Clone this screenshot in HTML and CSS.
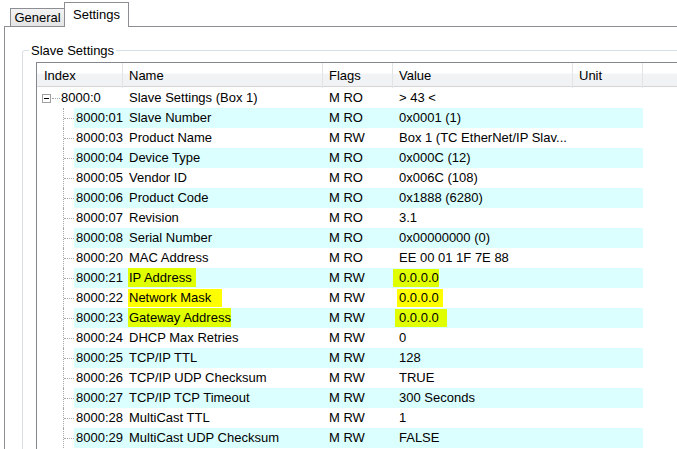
FILE: index.html
```html
<!DOCTYPE html>
<html>
<head>
<meta charset="utf-8">
<link rel="stylesheet" href="styles.css">
</head>
<body>
<div class="window">
  <div class="tabs">
    <div class="tab">General</div>
    <div class="tab active">Settings</div>
  </div>
  <div class="panel">
    <div class="group">
      <div class="group-title">Slave Settings</div>
      <div class="list">
        <div class="head">
          <div class="hc hc-index">Index</div>
          <div class="hc">Name</div>
          <div class="hc">Flags</div>
          <div class="hc">Value</div>
          <div class="hc">Unit</div>
          <div class="hc hc-fill"></div>
        </div>
        <div class="body">
          <div class="row">
            <div class="c-index"><span class="expander"></span><span class="hline"></span><span class="root-idx">8000:0</span></div>
            <div class="cell">Slave Settings (Box 1)</div>
            <div class="cell">M RO</div>
            <div class="cell">&gt; 43 &lt;</div>
            <div class="cell"></div>
            <div class="fill"></div>
          </div>
          <div class="row alt">
            <div class="c-index"><span class="tree"></span><span class="idx">8000:01</span></div>
            <div class="cell">Slave Number</div>
            <div class="cell">M RO</div>
            <div class="cell">0x0001 (1)</div>
            <div class="cell"></div>
            <div class="fill"></div>
          </div>
          <div class="row">
            <div class="c-index"><span class="tree"></span><span class="idx">8000:03</span></div>
            <div class="cell">Product Name</div>
            <div class="cell">M RW</div>
            <div class="cell">Box 1 (TC EtherNet/IP Slav...</div>
            <div class="cell"></div>
            <div class="fill"></div>
          </div>
          <div class="row alt">
            <div class="c-index"><span class="tree"></span><span class="idx">8000:04</span></div>
            <div class="cell">Device Type</div>
            <div class="cell">M RO</div>
            <div class="cell">0x000C (12)</div>
            <div class="cell"></div>
            <div class="fill"></div>
          </div>
          <div class="row">
            <div class="c-index"><span class="tree"></span><span class="idx">8000:05</span></div>
            <div class="cell">Vendor ID</div>
            <div class="cell">M RO</div>
            <div class="cell">0x006C (108)</div>
            <div class="cell"></div>
            <div class="fill"></div>
          </div>
          <div class="row alt">
            <div class="c-index"><span class="tree"></span><span class="idx">8000:06</span></div>
            <div class="cell">Product Code</div>
            <div class="cell">M RO</div>
            <div class="cell">0x1888 (6280)</div>
            <div class="cell"></div>
            <div class="fill"></div>
          </div>
          <div class="row">
            <div class="c-index"><span class="tree"></span><span class="idx">8000:07</span></div>
            <div class="cell">Revision</div>
            <div class="cell">M RO</div>
            <div class="cell">3.1</div>
            <div class="cell"></div>
            <div class="fill"></div>
          </div>
          <div class="row alt">
            <div class="c-index"><span class="tree"></span><span class="idx">8000:08</span></div>
            <div class="cell">Serial Number</div>
            <div class="cell">M RO</div>
            <div class="cell">0x00000000 (0)</div>
            <div class="cell"></div>
            <div class="fill"></div>
          </div>
          <div class="row">
            <div class="c-index"><span class="tree"></span><span class="idx">8000:20</span></div>
            <div class="cell">MAC Address</div>
            <div class="cell">M RO</div>
            <div class="cell">EE 00 01 1F 7E 88</div>
            <div class="cell"></div>
            <div class="fill"></div>
          </div>
          <div class="row alt">
            <div class="c-index"><span class="tree"></span><span class="idx">8000:21</span></div>
            <div class="cell"><span class="hl hl-ip">IP Address</span></div>
            <div class="cell">M RW</div>
            <div class="cell"><span class="hl hl-v1">0.0.0.0</span></div>
            <div class="cell"></div>
            <div class="fill"></div>
          </div>
          <div class="row">
            <div class="c-index"><span class="tree"></span><span class="idx">8000:22</span></div>
            <div class="cell"><span class="hl hl-mask">Network Mask</span></div>
            <div class="cell">M RW</div>
            <div class="cell"><span class="hl hl-v2">0.0.0.0</span></div>
            <div class="cell"></div>
            <div class="fill"></div>
          </div>
          <div class="row alt">
            <div class="c-index"><span class="tree"></span><span class="idx">8000:23</span></div>
            <div class="cell"><span class="hl hl-gw">Gateway Address</span></div>
            <div class="cell">M RW</div>
            <div class="cell"><span class="hl hl-v3">0.0.0.0</span></div>
            <div class="cell"></div>
            <div class="fill"></div>
          </div>
          <div class="row">
            <div class="c-index"><span class="tree"></span><span class="idx">8000:24</span></div>
            <div class="cell">DHCP Max Retries</div>
            <div class="cell">M RW</div>
            <div class="cell">0</div>
            <div class="cell"></div>
            <div class="fill"></div>
          </div>
          <div class="row alt">
            <div class="c-index"><span class="tree"></span><span class="idx">8000:25</span></div>
            <div class="cell">TCP/IP TTL</div>
            <div class="cell">M RW</div>
            <div class="cell">128</div>
            <div class="cell"></div>
            <div class="fill"></div>
          </div>
          <div class="row">
            <div class="c-index"><span class="tree"></span><span class="idx">8000:26</span></div>
            <div class="cell">TCP/IP UDP Checksum</div>
            <div class="cell">M RW</div>
            <div class="cell">TRUE</div>
            <div class="cell"></div>
            <div class="fill"></div>
          </div>
          <div class="row alt">
            <div class="c-index"><span class="tree"></span><span class="idx">8000:27</span></div>
            <div class="cell">TCP/IP TCP Timeout</div>
            <div class="cell">M RW</div>
            <div class="cell">300 Seconds</div>
            <div class="cell"></div>
            <div class="fill"></div>
          </div>
          <div class="row">
            <div class="c-index"><span class="tree"></span><span class="idx">8000:28</span></div>
            <div class="cell">MultiCast TTL</div>
            <div class="cell">M RW</div>
            <div class="cell">1</div>
            <div class="cell"></div>
            <div class="fill"></div>
          </div>
          <div class="row alt">
            <div class="c-index"><span class="tree"></span><span class="idx">8000:29</span></div>
            <div class="cell">MultiCast UDP Checksum</div>
            <div class="cell">M RW</div>
            <div class="cell">FALSE</div>
            <div class="cell"></div>
            <div class="fill"></div>
          </div>
        </div>
      </div>
    </div>
  </div>
</div>
</body>
</html>
```

FILE: styles.css
```css
html, body {
  margin: 0;
  padding: 0;
}
body {
  width: 677px;
  height: 449px;
  overflow: hidden;
  background: #ffffff;
  color: #000000;
  font: 13px "Liberation Sans", Arial, sans-serif;
}
.window {
  width: 677px;
  height: 449px;
  overflow: hidden;
}
.tabs {
  display: flex;
  align-items: flex-end;
  height: 26px;
  padding-left: 10px;
}
.tab {
  box-sizing: border-box;
  width: 55px;
  height: 18px;
  border: 1px solid #8c8e94;
  border-bottom: 0;
  background: linear-gradient(#f3f3f3, #e4e4e4);
  display: flex;
  align-items: center;
  justify-content: center;
}
.tab.active {
  width: 65px;
  height: 25px;
  margin-left: -1px;
  margin-bottom: -1px;
  padding-bottom: 2px;
  background: #ffffff;
  position: relative;
  z-index: 1;
}
.panel {
  width: 760px;
  margin-left: 4px;
  border: 1px solid #8c8e94;
  padding-left: 17px;
  height: 440px;
}
.group {
  margin-top: 23px;
  border: 1px solid #d5dfe5;
  border-radius: 3px;
  padding-left: 13px;
  height: 410px;
}
.group-title {
  margin: -8px 0 0 -7px;
  padding: 0 2px;
  width: max-content;
  background: #ffffff;
  line-height: 15px;
}
.list {
  margin-top: 4px;
  border-top: 1px solid #828790;
  border-left: 1px solid #828790;
  height: 390px;
}
.head,
.row {
  display: grid;
  grid-template-columns: 86px 200px 70px 180px 70px 1fr;
}
.head {
  box-sizing: border-box;
  height: 24px;
  border-bottom: 1px solid #d5d5d5;
  background: linear-gradient(#ffffff 0%, #ffffff 44%, #f2f3f5 48%, #f1f2f4 100%);
}
.hc {
  border-right: 1px solid #e3e4e6;
  padding-left: 6px;
  line-height: 25px;
  white-space: nowrap;
}
.hc-index {
  padding-left: 7px;
}
.hc-fill {
  border-right: 0;
}
.body {
  padding-top: 1px;
}
.row {
  height: 20px;
  line-height: 20px;
}
.cell {
  padding-left: 6px;
  white-space: nowrap;
  overflow: hidden;
}
.row.alt .cell,
.row.alt .idx {
  background: #dbffff;
}
.c-index {
  display: flex;
  align-items: stretch;
  white-space: nowrap;
}
.expander {
  box-sizing: border-box;
  align-self: center;
  width: 9px;
  height: 9px;
  margin-left: 5px;
  border: 1px solid #a0a0a0;
  background: #ffffff;
  position: relative;
}
.expander::after {
  content: "";
  position: absolute;
  left: 1px;
  top: 3px;
  width: 5px;
  height: 1px;
  background: #000000;
}
.hline {
  align-self: center;
  width: 8px;
  margin-left: 1px;
  border-top: 1px dotted #a0a0a0;
}
.root-idx {
  padding-left: 1px;
}
.tree {
  width: 37px;
  flex: none;
  position: relative;
}
.tree::before {
  content: "";
  position: absolute;
  left: 26px;
  top: 0;
  bottom: 0;
  border-left: 1px dotted #a8a8a8;
}
.tree::after {
  content: "";
  position: absolute;
  left: 27px;
  width: 10px;
  top: 10px;
  border-top: 1px dotted #a8a8a8;
}
.idx {
  flex: 1;
  padding-left: 2px;
}
.hl {
  display: inline-block;
  background: #ffff00;
  line-height: 18px;
}
.row.alt .hl {
  background: #e0ff00;
}
.hl-ip {
  margin-left: -1px;
  padding: 1px 4px 0 1px;
}
.hl-mask {
  margin-left: -1px;
  padding: 0 11px 0 1px;
}
.hl-gw {
  margin-left: -1px;
  padding: 1px 0 0 1px;
}
.hl-v1 {
  margin-left: -6px;
  padding: 0 0 0 6px;
}
.hl-v2 {
  margin-left: -2px;
  padding: 0 4px 0 2px;
}
.hl-v3 {
  margin-left: -4px;
  padding: 0 8px 0 4px;
}
```
